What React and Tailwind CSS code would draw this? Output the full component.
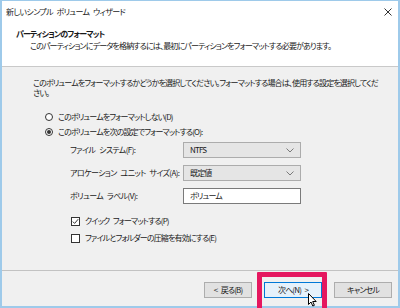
import React from 'react';

function Chevron() {
  return (
    <svg width="8" height="5" viewBox="0 0 8 5" className="shrink-0">
      <path d="M0.5 0.5 L4 4 L7.5 0.5" fill="none" stroke="#7a7a7a" strokeWidth="1" />
    </svg>
  );
}

function Radio({ checked, label, className = '' }) {
  return (
    <div className={"flex items-center h-[15px] pl-[43px] gap-[5px] " + className}>
      <span className="w-[8px] h-[8px] rounded-full border border-[#333] bg-white flex items-center justify-center">
        {checked && <span className="w-[4px] h-[4px] rounded-full bg-[#333]"></span>}
      </span>
      <span>{label}</span>
    </div>
  );
}

function Check({ checked, label, className }) {
  return (
    <div className={"flex items-center h-[14px] pl-[69px] gap-[5px] " + className}>
      <span className="w-[9px] h-[9px] border border-[#333] bg-white flex items-center justify-center">
        {checked && (
          <svg width="7" height="7" viewBox="0 0 7 7">
            <path d="M0.8 3.6 L2.6 5.4 L6.2 1.2" fill="none" stroke="#333" strokeWidth="1" />
          </svg>
        )}
      </span>
      <span>{label}</span>
    </div>
  );
}

function FieldRow({ label, children, className }) {
  return (
    <div className={"flex items-center h-[16px] " + className}>
      <span className="w-[181px] pl-[68px] shrink-0 tracking-[-0.6px]">{label}</span>
      {children}
    </div>
  );
}

function SelectBox({ value }) {
  return (
    <div className="w-[118px] h-full bg-[#e5e5e5] border border-[#acacac] flex items-center justify-between pl-[6px] pr-[6px]">
      <span>{value}</span>
      <Chevron />
    </div>
  );
}

export default function App() {
  return (
    <div className="w-[400px] h-[308px] relative overflow-hidden bg-white font-['Noto_Sans_CJK_JP',sans-serif] [font-feature-settings:'palt'] text-[8px] tracking-[-0.85px] [word-spacing:2.5px] leading-[10px] text-[#1a1a1a] whitespace-nowrap">
      <div className="w-full h-full flex flex-col border-x-2 border-b-2 border-t border-[#9ecaea]">
        {/* title bar */}
        <div className="h-[21px] flex items-center justify-between pl-[4px] pr-[6px] bg-white shrink-0">
          <span className="tracking-[-0.65px]">新しいシンプル ボリューム ウィザード</span>
          <svg width="8" height="8" viewBox="0 0 8 8">
            <path d="M0.5 0.5 L7.5 7.5 M7.5 0.5 L0.5 7.5" stroke="#333" strokeWidth="1" />
          </svg>
        </div>

        {/* header */}
        <div className="h-[45px] bg-white border-b border-[#c9c9c9] shrink-0 flex flex-col pt-[6px]">
          <span className="pl-[14px] font-bold h-[12px] leading-[12px]">パーティションのフォーマット</span>
          <span className="pl-[28px] h-[12px] leading-[12px]">このパーティションにデータを格納するには、最初にパーティションをフォーマットする必要があります。</span>
        </div>

        {/* body */}
        <div className="flex-1 bg-[#f0f0f0] flex flex-col">
          <p className="pl-[31px] pr-[14px] pt-[11px] leading-[10px] h-[31px] whitespace-normal">
            このボリュームをフォーマットするかどうかを選択してください。フォーマットする場合は、使用する設定を選択してください。
          </p>
          <Radio checked={false} label="このボリュームをフォーマットしない(D)" className="mt-[11px]" />
          <Radio checked={true} label="このボリュームを次の設定でフォーマットする(O):" />

          <FieldRow label="ファイル システム(F):" className="mt-[3px]">
            <SelectBox value="NTFS" />
          </FieldRow>
          <FieldRow label="アロケーション ユニット サイズ(A):" className="mt-[7px]">
            <SelectBox value="既定値" />
          </FieldRow>
          <FieldRow label="ボリューム ラベル(V):" className="mt-[7px]">
            <div className="w-[118px] h-full bg-white border border-[#7a7a7a] flex items-center pl-[6px]">ボリューム</div>
          </FieldRow>

          <Check checked={true} label="クイック フォーマットする(P)" className="mt-[10px]" />
          <Check checked={false} label="ファイルとフォルダーの圧縮を有効にする(E)" className="mt-[3px]" />

          <div className="flex-1"></div>

          {/* footer */}
          <div className="h-[36px] border-t border-[#c2c2c2] flex justify-end items-start pt-[11px] pr-[6px] gap-[12px]">
            <div className="w-[48px] h-[16px] bg-[#e1e1e1] border border-[#adadad] flex items-center justify-center">&lt; 戻る(B)</div>
            <div className="w-[58px] h-[16px] bg-[#e5f1fb] border border-[#0078d7] flex items-center justify-center">次へ(N) &gt;</div>
            <div className="w-[58px] h-[16px] bg-[#e1e1e1] border border-[#adadad] flex items-center justify-center">キャンセル</div>
          </div>
        </div>
      </div>

      {/* highlight overlay */}
      <div className="absolute left-[257px] top-[272px] w-[70px] h-[44px] border-[5px] border-[#e5175f] rounded-[1px]"></div>

      {/* mouse cursor */}
      <svg className="absolute left-[308px] top-[293px]" width="10" height="15" viewBox="0 0 10 15">
        <path d="M0.5 0.5 L0.5 11.5 L3 9 L4.8 13 L6.4 12.3 L4.7 8.5 L8.2 8.5 Z" fill="#fff" stroke="#000" strokeWidth="1" strokeLinejoin="round" />
      </svg>
    </div>
  );
}
